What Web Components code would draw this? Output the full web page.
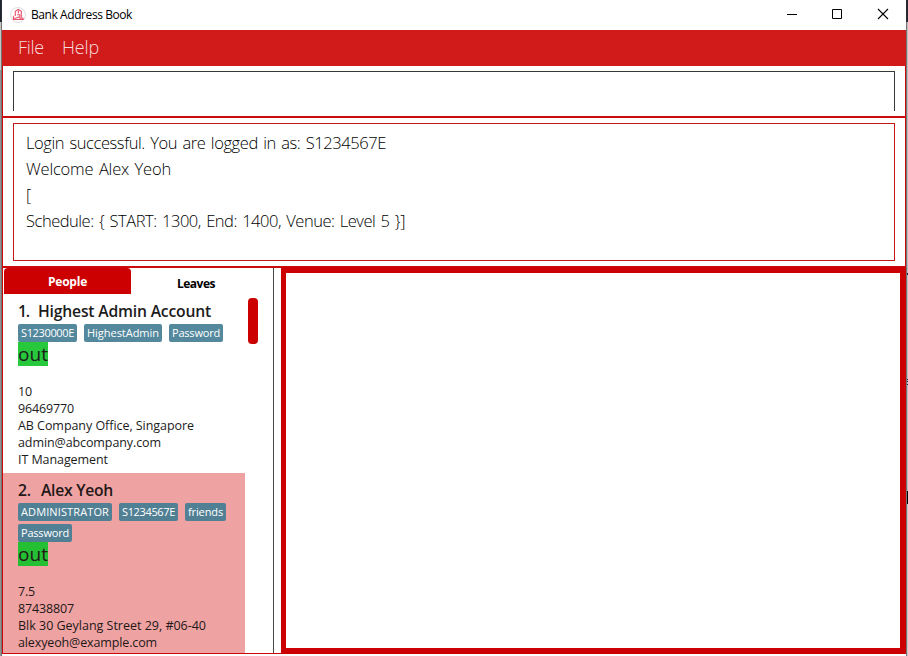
<!DOCTYPE html>
<html lang="en">
<head>
<meta charset="utf-8">
<title>Bank Address Book</title>
<style>
html,body{margin:0;height:100%;overflow:hidden;background:#fff;font-family:"Open Sans","Noto Sans",sans-serif}
</style>
</head>
<body>
<address-book-app></address-book-app>
<script>
const define = (name, html, init) => customElements.define(name, class extends HTMLElement {
  connectedCallback() {
    if (this.shadowRoot) return;
    const t = document.createElement('template');
    t.innerHTML = html;
    this.attachShadow({mode: 'open'}).append(t.content.cloneNode(true));
    if (init) init(this, this.shadowRoot);
  }
});

// Text run whose letter spacing is adjusted so that it occupies a given width.
define('fit-text', `<style>:host{display:inline-block;white-space:pre}span{display:inline-block;white-space:pre}</style><span><slot></slot></span>`, (el, root) => {
  const want = +el.getAttribute('w');
  if (!want) return;
  const s = root.querySelector('span');
  const n = el.textContent.length;
  s.style.letterSpacing = ((want - s.getBoundingClientRect().width) / n) + 'px';
});

define('title-bar', `<style>
:host{display:flex;align-items:center;height:30px;background:#fff;color:#000;font:12px/30px "Open Sans","Noto Sans",sans-serif;padding-left:8px;box-sizing:border-box}
.logo{margin-right:5px;display:block}
.controls{margin-left:auto;display:flex}
.controls svg{display:block}
</style>
<svg class="logo" width="16" height="16" viewBox="0 0 16 16"><circle cx="8" cy="8" r="7.5" fill="#fff" stroke="#dedede"/><g fill="none" stroke="#e9526c" stroke-width="1.1"><path d="M5.3 9V4.2L8.3 2.500l3 1.700v6"/><path d="M8.400 3.500v3M7.200 7.700h2.600v2.300"/><path d="M3.400 8.800v3.700h9.800v-1.200M3.400 11.200h2.400l2.400-1.100 2 1h3"/></g></svg>
<fit-text w="101">Bank Address Book</fit-text>
<div class="controls">
<svg width="45" height="30"><path d="M17 14.500h10" stroke="#000"/></svg>
<svg width="45" height="30"><path d="M17.500 9.500h9v9h-9z" fill="none" stroke="#000"/></svg>
<svg width="46" height="30"><path d="M18 9l10 10M28 9l-10 10" stroke="#000" stroke-width="1.100"/></svg>
</div>`);

define('menu-bar', `<style>
:host{display:flex;gap:18px;height:36px;box-sizing:border-box;padding:0 16px;background:#d11a1a;color:#f6dcdc;font-size:18px;line-height:35px;font-weight:300}
</style><slot></slot>`);

define('command-box', `<style>
:host{display:block;height:52px;box-sizing:border-box;padding:5px 10px 0;border-bottom:2px solid #cc0c0c}
div{height:40px;box-sizing:border-box;border:1px solid #383838;border-bottom:0}
</style><div></div>`);

define('result-display', `<style>
:host{display:block;height:150px;box-sizing:border-box;padding:5px 10px;border-bottom:2px solid #cc0c0c}
div{height:138px;box-sizing:border-box;border:1px solid #c51717;padding:6px 12px;display:flex;flex-direction:column;align-items:flex-start;font-size:16.500px;line-height:26px;font-weight:300;color:#000;word-spacing:1.500px}
</style><div><slot></slot></div>`);

define('tab-header', `<style>
:host{display:flex;height:26px;padding-left:1px;font-size:12px;font-weight:700}
div{display:flex;align-items:center;justify-content:center;height:26px;box-sizing:border-box}
.on{width:127px;background:#c00;color:#fff;border-radius:4px 4px 0 0;padding-top:1px}
.off{width:130px;color:#000;padding-top:4px}
</style><div class="on"><fit-text w="39">People</fit-text></div><div class="off"><fit-text w="38">Leaves</fit-text></div>`);

define('tag-chip', `<style>
:host{display:block;height:18px;box-sizing:border-box;border-radius:2px;background:#53889d;color:#fff;padding:0 3px;font-size:11px;line-height:18px}
:host([dim]){background:#517f94}
</style><slot></slot>`);

define('person-card', `<style>
:host{display:block;width:242px;height:179px;box-sizing:border-box;padding:5px 15px;overflow:hidden;color:#1c1c1c}
:host([selected]){background:#efa2a2;height:180px;color:#231818}
.name{height:25px;font-size:15.700px;line-height:25px;font-weight:600;display:grid;grid-template-columns:20px auto}
:host([selected]) .name{grid-template-columns:23px auto}
.tags{display:flex;flex-wrap:wrap;gap:3px 7px;margin-right:-12px}
.status{display:block;width:30px;height:24px;margin-bottom:17px;background:#28c83c;font-size:19px;line-height:24px}
:host([selected]) .status{background:#25bf34}
.details{display:flex;flex-direction:column;align-items:flex-start;font-size:12.500px;line-height:17px;white-space:nowrap}
</style>
<div class="name"><slot name="name"></slot></div>
<div class="tags"><slot name="tags"></slot></div>
<div class="status"><fit-text w="30">out</fit-text></div>
<div class="details"><slot></slot></div>`);

define('side-panel', `<style>
:host{display:block;width:271px;box-sizing:border-box;border-right:1px solid #484848;overflow:hidden}
.body{display:flex;gap:3px}
i{display:block;width:10px;height:46px;margin-top:4px;border-radius:4px;background:#c00}
</style><slot name="tabs"></slot><div class="body"><section><slot></slot></section><i></i></div>`);

define('browser-panel', `<style>
:host{display:block;flex:1;margin:-1px -1px -1px 7px;box-sizing:border-box;border:solid #c00;border-width:6px 6px 6px 5px;background:#fff}
</style>`);

define('address-book-app', `<style>
:host{display:grid;grid-template-columns:2px 904px 2px;width:908px;height:656px;color:#000}
.left{background:linear-gradient(#20242e 22px,#c5c5c5 22px 70px,#929292 70px)}
.left,.right{display:flex}
.left::after,.right::before{content:"";width:1px;background:linear-gradient(#282c35 22px,#747474 22px)}
.left::after{margin-left:1px}
.right{background:linear-gradient(#252832 22px,#bdbdbd 22px 273px,#182034 273px 275px,#bdbdbd 275px 379px,#182034 379px 380px,#bdbdbd 380px 381px,#182034 381px 382px,#bdbdbd 382px 384px,#182034 384px 385px,#bdbdbd 385px 491px,#000 491px 504px,#c6c6c6 504px)}
.window{display:flex;flex-direction:column;min-width:0}
.frame{height:588px;box-sizing:border-box;border:1px solid #cc0808;border-top:0;background:#fff}
.split{display:flex;height:385px}
</style>
<div class="left"></div>
<div class="window">
<title-bar></title-bar>
<menu-bar><fit-text w="26">File</fit-text><fit-text w="37">Help</fit-text></menu-bar>
<div class="frame">
<command-box></command-box>
<result-display>
<fit-text w="360">Login successful. You are logged in as: S1234567E</fit-text>
<fit-text w="145">Welcome Alex Yeoh</fit-text>
<fit-text>[</fit-text>
<fit-text w="379">Schedule: { START: 1300, End: 1400, Venue: Level 5 }]</fit-text>
</result-display>
<div class="split">
<side-panel>
<tab-header slot="tabs"></tab-header>
<person-card>
<fit-text slot="name" w="11">1.</fit-text><fit-text slot="name" w="173">Highest Admin Account</fit-text>
<tag-chip slot="tags"><fit-text w="53">S1230000E</fit-text></tag-chip><tag-chip slot="tags"><fit-text w="72">HighestAdmin</fit-text></tag-chip><tag-chip slot="tags"><fit-text w="48">Password</fit-text></tag-chip>
<fit-text w="14">10</fit-text><fit-text w="56">96469770</fit-text><fit-text w="176">AB Company Office, Singapore</fit-text><fit-text w="143">admin@abcompany.com</fit-text><fit-text w="90">IT Management</fit-text>
</person-card>
<person-card selected>
<fit-text slot="name" w="13">2.</fit-text><fit-text slot="name" w="72">Alex Yeoh</fit-text>
<tag-chip dim slot="tags"><fit-text w="88">ADMINISTRATOR</fit-text></tag-chip><tag-chip dim slot="tags"><fit-text w="53">S1234567E</fit-text></tag-chip><tag-chip dim slot="tags"><fit-text w="35">friends</fit-text></tag-chip><tag-chip dim slot="tags"><fit-text w="48">Password</fit-text></tag-chip>
<fit-text w="17">7.5</fit-text><fit-text w="56">87438807</fit-text><fit-text w="188">Blk 30 Geylang Street 29, #06-40</fit-text><fit-text w="139">alexyeoh@example.com</fit-text>
</person-card>
</side-panel>
<browser-panel></browser-panel>
</div>
</div>
</div>
<div class="right"></div>`);
</script>
</body>
</html>
